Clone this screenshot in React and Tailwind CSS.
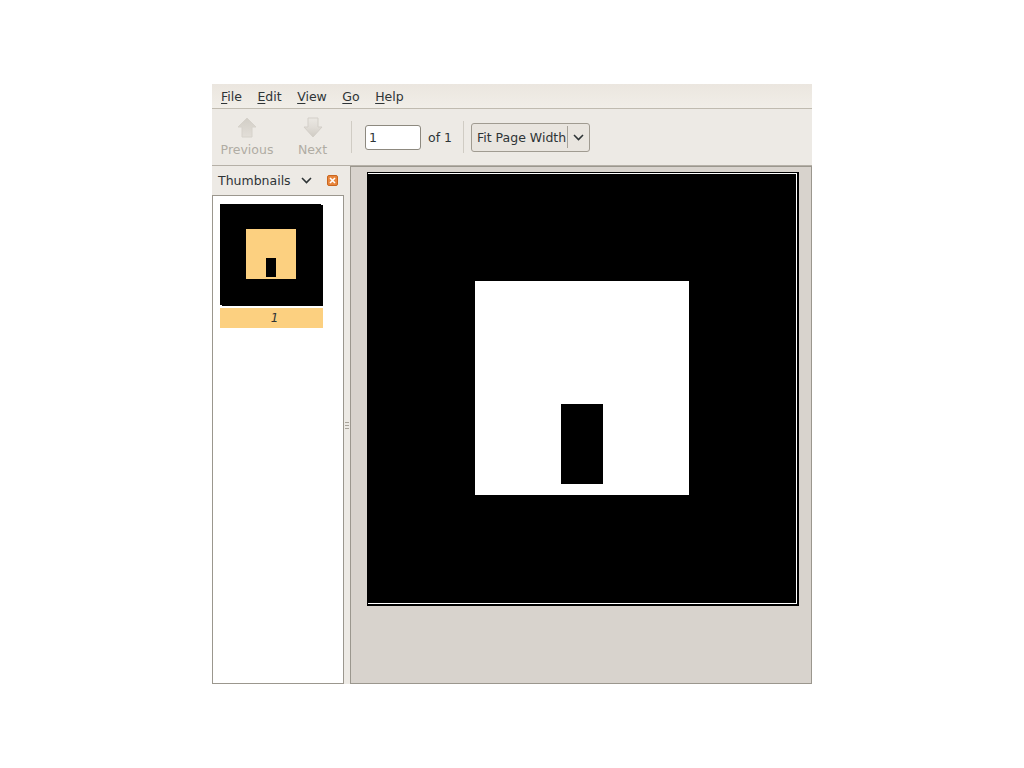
import React from "react";

const font = { fontFamily: '"DejaVu Sans", sans-serif' };

function Menu({ first, rest }) {
  return (
    <span className="leading-none pt-[2px]">
      <span className="underline underline-offset-2">{first}</span>
      {rest}
    </span>
  );
}

function UpArrow() {
  return (
    <svg width="20" height="22" viewBox="0 0 20 22">
      <defs>
        <linearGradient id="ua" x1="0" y1="0" x2="0" y2="1">
          <stop offset="0" stopColor="#d2cec6" />
          <stop offset="1" stopColor="#e2ded8" />
        </linearGradient>
      </defs>
      <path d="M10 1 L19 10 L15 10 L15 20 L5 20 L5 10 L1 10 Z" fill="url(#ua)" stroke="#d6d2cb" strokeWidth="1" />
    </svg>
  );
}

function DownArrow() {
  return (
    <svg width="20" height="22" viewBox="0 0 20 22">
      <defs>
        <linearGradient id="da" x1="0" y1="0" x2="0" y2="1">
          <stop offset="0" stopColor="#ebe8e3" />
          <stop offset="0.5" stopColor="#e0dcd6" />
          <stop offset="1" stopColor="#cfcbc3" />
        </linearGradient>
      </defs>
      <path d="M10 20 L19 10 L15 10 L15 1 L5 1 L5 10 L1 10 Z" fill="url(#da)" stroke="#d3cfc8" strokeWidth="1" />
    </svg>
  );
}

function Chevron() {
  return (
    <svg width="11" height="7" viewBox="0 0 11 7">
      <path d="M1 1 L5.5 5.5 L10 1" fill="none" stroke="#2e3436" strokeWidth="1.6" />
    </svg>
  );
}

export default function App() {
  return (
    <div className="w-[1024px] h-[768px] bg-white flex items-center justify-center text-[12.5px] text-[#2e3436]" style={font}>
      <div className="w-[600px] h-[600px] flex flex-col bg-[#edeae5]">
        <div className="h-[25px] shrink-0 flex items-center pl-[9px] gap-[15.5px] bg-linear-to-b from-[#ebe6df] to-[#f1eee8] border-b border-[#c0bbb0]">
          <Menu first="F" rest="ile" />
          <Menu first="E" rest="dit" />
          <Menu first="V" rest="iew" />
          <Menu first="G" rest="o" />
          <Menu first="H" rest="elp" />
        </div>

        <div className="h-[57px] shrink-0 flex items-center bg-[#edeae5] border-b border-[#b5b0a7]">
          <div className="w-[70px] flex flex-col items-center text-[#b0aca3]">
            <UpArrow />
            <span className="mt-[3px] leading-[16px]">Previous</span>
          </div>
          <div className="w-[61px] flex flex-col items-center text-[#b0aca3]">
            <DownArrow />
            <span className="mt-[3px] leading-[16px]">Next</span>
          </div>
          <div className="w-px h-[32px] bg-[#d0ccc4] ml-[8px]" />
          <div className="ml-[13px] w-[56px] h-[25px] bg-white border border-[#8d897f] rounded-[3px] flex items-center pl-[3px] pt-[2px]">1</div>
          <span className="ml-[7px] pt-[2px]">of 1</span>
          <div className="w-px h-[32px] bg-[#d0ccc4] ml-[11px]" />
          <div className="ml-[7px] w-[119px] h-[29px] flex items-center border border-[#a09b91] rounded-[3px] bg-[#e9e5df] pl-[5px]">
            <span className="w-[90px] whitespace-nowrap pt-[2px]">Fit Page Width</span>
            <div className="w-px h-[22px] bg-[#a8a39a]" />
            <div className="ml-[5px] flex items-center"><Chevron /></div>
          </div>
        </div>

        <div className="flex-1 min-h-0 flex">
          <div className="w-[132px] shrink-0 flex flex-col">
            <div className="h-[29px] shrink-0 flex items-center pl-[6px]">
              <span className="pt-[2px]">Thumbnails</span>
              <span className="ml-[10px] flex"><Chevron /></span>
              <span className="ml-[15px] w-[11px] h-[11px] rounded-[2px] bg-[#e8853c] border border-[#c9661e] flex items-center justify-center">
                <svg width="7" height="7" viewBox="0 0 7 7">
                  <path d="M1 1 L6 6 M6 1 L1 6" stroke="#fff" strokeWidth="1.6" />
                </svg>
              </span>
            </div>
            <div className="flex-1 bg-white border border-[#9b978e] pt-[8px] pl-[7px]">
              <div className="relative w-[103px] h-[102px] bg-black pl-[26px] pt-[25px]">
                <div className="absolute top-0 right-0 w-[2px] h-px bg-white" />
                <div className="absolute bottom-0 left-0 w-[2px] h-px bg-white" />
                <div className="w-[50px] h-[50px] bg-[#fcd080] flex items-end pb-[2px] pl-[20px]">
                  <div className="w-[10px] h-[19px] bg-black" />
                </div>
              </div>
              <div className="w-[103px] h-[20px] mt-[2px] pl-[6px] bg-[#fcd080] flex items-center justify-center italic text-[12px]">1</div>
            </div>
          </div>

          <div className="w-[6px] shrink-0 flex flex-col items-center justify-center gap-[2px]">
            <div className="w-[4px] h-px bg-[#a8a39a]" />
            <div className="w-[4px] h-px bg-[#a8a39a]" />
            <div className="w-[4px] h-px bg-[#a8a39a]" />
          </div>

          <div className="flex-1 min-w-0 bg-[#d8d3cd] border border-[#9b978e] pt-[5px] pl-[16px]">
            <div className="w-[432px] h-[434px] border-t border-l border-r-2 border-b-2 border-black">
              <div className="w-[429px] h-[431px] bg-black border-t border-r border-b border-white pl-[107px] pt-[107px]">
                <div className="w-[214px] h-[214px] bg-white flex items-end pb-[11px] pl-[86px]">
                  <div className="w-[42px] h-[80px] bg-black" />
                </div>
              </div>
            </div>
          </div>
        </div>
      </div>
    </div>
  );
}
